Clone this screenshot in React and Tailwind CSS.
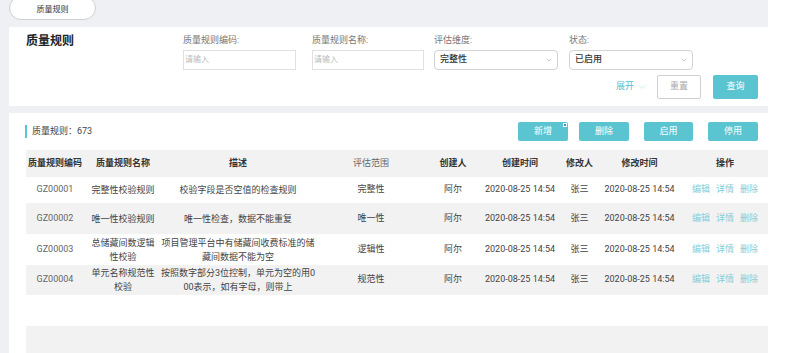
import { ChevronDown } from "lucide-react";

const rows = [
  {
    code: "GZ00001",
    name: ["完整性校验规则"],
    desc: ["校验字段是否空值的检查规则"],
    scope: "完整性",
    h: "h-[26px]",
    bg: "bg-white",
  },
  {
    code: "GZ00002",
    name: ["唯一性校验规则"],
    desc: ["唯一性检查，数据不能重复"],
    scope: "唯一性",
    h: "h-[31px]",
    bg: "bg-[#f2f2f2]",
  },
  {
    code: "GZ00003",
    name: ["总储藏间数逻辑", "性校验"],
    desc: ["项目管理平台中有储藏间收费标准的储", "藏间数据不能为空"],
    scope: "逻辑性",
    h: "h-[31px]",
    bg: "bg-white",
  },
  {
    code: "GZ00004",
    name: ["单元名称规范性", "校验"],
    desc: ["按照数字部分3位控制，单元为空的用0", "00表示，如有字母，则带上"],
    scope: "规范性",
    h: "h-[30px]",
    bg: "bg-[#f2f2f2]",
  },
];

const cols = [
  "w-[58px]",
  "w-[78px]",
  "w-[152px]",
  "w-[114px]",
  "w-[50px]",
  "w-[84px]",
  "w-[35px]",
  "w-[85px]",
  "w-[86px]",
];

const heads = [
  "质量规则编码",
  "质量规则名称",
  "描述",
  "评估范围",
  "创建人",
  "创建时间",
  "修改人",
  "修改时间",
  "操作",
];

function Lines({ items }) {
  return (
    <div className="flex flex-col leading-[14px]">
      {items.map((t) => (
        <span key={t} className="whitespace-nowrap">
          {t}
        </span>
      ))}
    </div>
  );
}

function Field({ label, width, children }) {
  return (
    <div className={`flex flex-col ${width}`}>
      <span className="text-[9px] leading-[12px] text-[#777]">{label}</span>
      <div className="mt-[4px]">{children}</div>
    </div>
  );
}

function Select({ value }) {
  return (
    <div className="h-[20px] w-full rounded-[4px] border border-[#d4d4d4] bg-white flex items-center justify-between pl-[5px] pr-[4px]">
      <span className="text-[9px] font-medium text-[#333]">{value}</span>
      <ChevronDown size={8} strokeWidth={1.5} color="#999" />
    </div>
  );
}

export default function App() {
  return (
    <div
      className="w-[800px] h-[353px] overflow-hidden bg-white flex"
      style={{ fontFamily: 'Roboto, "Noto Sans CJK SC", sans-serif' }}
    >
      <div className="w-[768px] h-full bg-[#eff0f4] flex flex-col pl-[9px]">

        {/* Tab */}
        <div className="h-[27px] shrink-0">
          <div className="-mt-[4px] h-[24px] w-[87px] rounded-[12px] border border-[#d0d0d0] bg-white flex items-center justify-center pt-[3px]">
            <span className="text-[8px] text-[#333]">质量规则</span>
          </div>
        </div>

        {/* Search card */}
        <div className="h-[79px] shrink-0 bg-white flex flex-col pt-[7px]">
          <div className="flex pl-[17px]">
            <div className="w-[157px] text-[12px] leading-[14px] font-bold text-[#222]">
              质量规则
            </div>

            <Field label="质量规则编码:" width="w-[113px]">
              <div className="h-[20px] border border-[#e0e0e0] flex items-center pl-[1px]">
                <span className="text-[8px] text-[#bbb]">请输入</span>
              </div>
            </Field>

            <div className="w-[16px]" />

            <Field label="质量规则名称:" width="w-[112px]">
              <div className="h-[20px] border border-[#e0e0e0] flex items-center pl-[1px]">
                <span className="text-[8px] text-[#bbb]">请输入</span>
              </div>
            </Field>

            <div className="w-[10px]" />

            <Field label="评估维度:" width="w-[124px]">
              <Select value="完整性" />
            </Field>

            <div className="w-[11px]" />

            <Field label="状态:" width="w-[124px]">
              <Select value="已启用" />
            </Field>
          </div>

          <div className="mt-[5px] flex justify-end items-center pr-[10px]">
            <div className="flex items-center gap-[2px] text-[9px] text-[#5bc0d0] mr-[9px]">
              <span>展开</span>
              <ChevronDown size={12} strokeWidth={1} color="#9bd6df" />
            </div>
            <button className="h-[24px] w-[44px] border border-[#d0d0d0] rounded-[2px] bg-white text-[9px] text-[#aaa]">
              重置
            </button>
            <button className="ml-[12px] h-[24px] w-[45px] rounded-[2px] bg-[#5bc4d1] text-[9px] text-white">
              查询
            </button>
          </div>
        </div>

        <div className="h-[7px] shrink-0" />

        {/* List card */}
        <div className="flex-1 bg-white flex flex-col">
          <div className="mt-[9px] h-[19px] flex items-center pl-[16px] pr-[10px]">
            <div className="w-[2px] h-[13px] bg-[#5bc4d1]" />
            <span className="ml-[5px] text-[9px] text-[#444]">质量规则：673</span>

            <div className="ml-auto flex">
              <button className="relative h-[19px] w-[50px] rounded-[2px] bg-[#5bc4d1] text-[9px] text-white">
                新增
                <span className="absolute top-[1px] right-[1px] w-[4px] h-[4px] bg-[#3a8fd8] border-[0.5px] border-white" />
              </button>
              <button className="ml-[11px] h-[19px] w-[50px] rounded-[2px] bg-[#5bc4d1] text-[9px] text-white">
                删除
              </button>
              <button className="ml-[15px] h-[19px] w-[49px] rounded-[2px] bg-[#5bc4d1] text-[9px] text-white">
                启用
              </button>
              <button className="ml-[15px] h-[19px] w-[50px] rounded-[2px] bg-[#5bc4d1] text-[9px] text-white">
                停用
              </button>
            </div>
          </div>

          {/* Table */}
          <div className="mt-[9px] ml-[17px] flex flex-col">
            <div className="h-[27px] bg-[#f2f2f2] flex items-center">
              {heads.map((h, i) => (
                <div
                  key={h}
                  className={`${cols[i]} text-center text-[9px] whitespace-nowrap ${
                    i === 3 ? "text-[#666] font-normal" : "text-[#333] font-bold"
                  }`}
                >
                  {h}
                </div>
              ))}
            </div>

            {rows.map((r) => (
              <div key={r.code} className={`${r.h} ${r.bg} flex items-center text-[9px]`}>
                <div className={`${cols[0]} text-center text-[#666]`}>{r.code}</div>
                <div className={`${cols[1]} flex justify-center text-center text-[#444]`}>
                  <Lines items={r.name} />
                </div>
                <div className={`${cols[2]} flex justify-center text-center text-[#444]`}>
                  <Lines items={r.desc} />
                </div>
                <div className={`${cols[3]} text-center text-[#444]`}>{r.scope}</div>
                <div className={`${cols[4]} text-center text-[#444]`}>阿尔</div>
                <div className={`${cols[5]} text-center text-[#444] whitespace-nowrap`}>
                  2020-08-25 14:54
                </div>
                <div className={`${cols[6]} text-center text-[#444]`}>张三</div>
                <div className={`${cols[7]} text-center text-[#444] whitespace-nowrap`}>
                  2020-08-25 14:54
                </div>
                <div className={`${cols[8]} flex justify-center gap-[6px] text-[#86cdd8]`}>
                  <span>编辑</span>
                  <span>详情</span>
                  <span>删除</span>
                </div>
              </div>
            ))}
          </div>

          <div className="h-[31px] shrink-0" />
          <div className="flex-1 ml-[17px] bg-[#f2f2f2]" />
        </div>
      </div>
    </div>
  );
}
